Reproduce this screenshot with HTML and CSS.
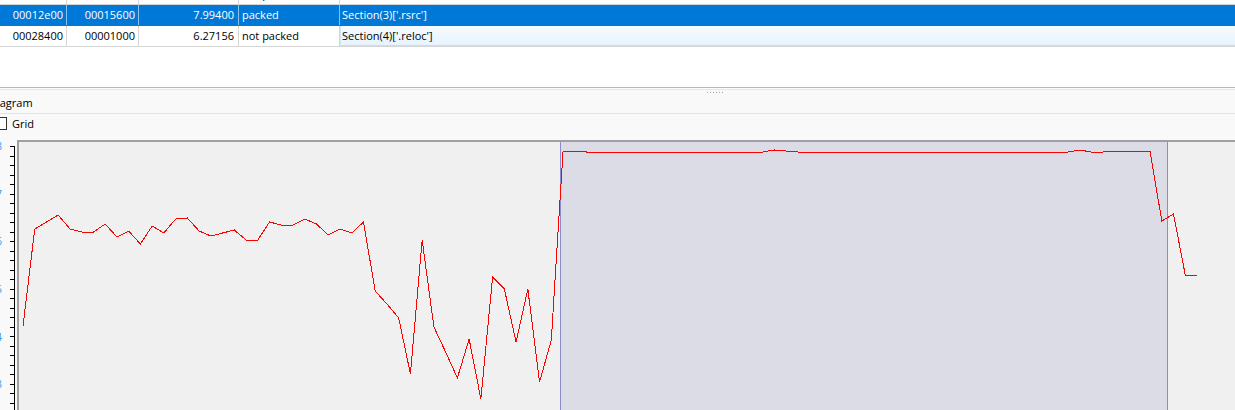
FILE: index.html
```html
<!DOCTYPE html>
<html>
<head>
<meta charset="utf-8">
<link rel="stylesheet" href="styles.css">
</head>
<body>
<div class="app">
  <div class="table">
    <div class="rows">
      <div class="row">
        <div class="c c1">00009a00</div>
        <div class="c c2">00009400</div>
        <div class="c c3">5.43210</div>
        <div class="c c4">not packed</div>
        <div class="c c5">Section(2)['.data']</div>
      </div>
      <div class="row sel">
        <div class="c c1">00012e00</div>
        <div class="c c2">00015600</div>
        <div class="c c3">7.99400</div>
        <div class="c c4">packed</div>
        <div class="c c5">Section(3)['.rsrc']</div>
      </div>
      <div class="row">
        <div class="c c1">00028400</div>
        <div class="c c2">00001000</div>
        <div class="c c3">6.27156</div>
        <div class="c c4">not packed</div>
        <div class="c c5 hot">Section(4)['.reloc']</div>
      </div>
    </div>
  </div>
  <div class="splitter"><span class="grip"></span></div>
  <div class="panel">
    <div class="title"><span class="title-text">Diagram</span></div>
    <div class="opt"><span class="box"></span><span class="opt-label">Grid</span></div>
    <div class="chart">
      <svg class="plot" width="1235" height="270" viewBox="0 0 1235 270" shape-rendering="crispEdges">
        <rect x="17" y="0" width="1218" height="270" fill="#f0f0f0"/>
        <rect x="561" y="2" width="606" height="268" fill="#dcdce6"/>
        <rect x="17" y="0" width="1218" height="2" fill="#a0a0a0"/>
        <rect x="17" y="0" width="2" height="270" fill="#a0a0a0"/>
        <line x1="560.5" y1="2" x2="560.5" y2="270" stroke="#8c8cc8" stroke-width="1"/>
        <line x1="1167.5" y1="2" x2="1167.5" y2="270" stroke="#8c8cc8" stroke-width="1"/>
        <line x1="14.5" y1="6" x2="14.5" y2="270" stroke="#000" stroke-width="1"/>
        <path stroke="#000" stroke-width="1" fill="none" d="M10 6.5h5M10 16.5h5M10 25.5h5M10 35.5h5M10 44.5h5M10 54.5h5M10 63.5h5M10 73.5h5M10 82.5h5M10 92.5h5M10 101.5h5M10 111.5h5M10 120.5h5M10 130.5h5M10 139.5h5M10 149.5h5M10 158.5h5M10 168.5h5M10 177.5h5M10 187.5h5M10 196.5h5M10 206.5h5M10 215.5h5M10 225.5h5M10 234.5h5M10 244.5h5M10 253.5h5M10 263.5h5"/>
        <g class="ticklbl" text-anchor="end">
          <text x="2" y="10">8</text>
          <text x="2" y="58">7</text>
          <text x="2" y="105">6</text>
          <text x="2" y="153">5</text>
          <text x="2" y="201">4</text>
          <text x="2" y="248">3</text>
        </g>
        <polyline fill="none" stroke="#ff0000" stroke-width="1" points="23,186 34.74,89 46.48,82 58.22,75 69.96,89 81.7,92 93.44,92 105.18,84 116.92,97 128.66,91 140.4,104 152.14,86 163.88,93 175.62,79 187.36,78 199.1,91 210.84,96 222.58,93 234.32,90 246.06,100 257.8,100 269.54,82 281.28,85 293.02,85 304.76,79 316.5,84 328.24,95 339.98,89 351.72,93 363.46,82 375.2,151 386.94,164 398.68,178 410.42,234 422.16,100 433.9,187 445.64,212 457.38,238 469.12,199 480.86,259 492.6,137 504.34,149 516.08,202 527.82,149 539.56,242 551.3,200 563.04,11 574.78,11 586.52,12 762.62,12 774.36,10 786.1,11 797.84,12 1067.86,12 1079.6,10 1091.34,12 1103.08,12 1114.82,11 1150.04,11 1161.78,81 1173.52,74 1185.26,135 1197,135"/>
      </svg>
    </div>
  </div>
</div>
</body>
</html>
```

FILE: styles.css
```css
* {
  box-sizing: border-box;
  margin: 0;
  padding: 0;
}

html,
body {
  width: 1235px;
  height: 410px;
  overflow: hidden;
  background: #ffffff;
}

body {
  font-family: "Open Sans", "Noto Sans", sans-serif;
  font-size: 11px;
  color: #000000;
}

.app {
  display: flex;
  flex-direction: column;
  height: 410px;
}

.table {
  height: 87px;
  flex: 0 0 87px;
  overflow: hidden;
  background: #ffffff;
}

.rows {
  margin-top: -16px;
}

.row {
  display: flex;
  height: 21px;
  border-bottom: 1px solid #d6d6d6;
}

.c {
  height: 20px;
  line-height: 20px;
  padding: 0 3px;
  border-right: 1px solid #d6d6d6;
  white-space: nowrap;
  overflow: hidden;
}

.c1 {
  width: 67px;
  text-align: right;
}

.c2 {
  width: 72px;
  text-align: right;
}

.c3 {
  width: 100px;
  text-align: right;
  padding-right: 4px;
}

.c4 {
  width: 101px;
}

.c5 {
  flex: 1;
  border-right: 0;
  padding-left: 2px;
}

.sel {
  background: #0078d7;
  color: #ffffff;
  border-bottom-color: #0078d7;
}

.sel .c {
  border-right-color: rgba(255, 255, 255, 0.55);
}

.hot {
  background: linear-gradient(#f6fbff, #e6f3fe);
  box-shadow: inset 0 -1px #c4e0f7, inset 1px 0 #d4e6f5;
}

.splitter {
  flex: 0 0 6px;
  height: 6px;
  border-top: 1px solid #b9b9b9;
  background: linear-gradient(#fdfdfd 0 1px, #e6e6e6 1px 2px, #f9f9f9 2px);
}

.grip {
  display: block;
  margin-left: 707px;
  margin-top: 4px;
  width: 16px;
  height: 1px;
  background: repeating-linear-gradient(to right, #a8a8a8 0 1px, transparent 1px 3px);
}

.panel {
  flex: 1;
  display: flex;
  flex-direction: column;
  background: #f9f9f9;
  overflow: hidden;
}

.title {
  height: 21px;
  flex: 0 0 21px;
  line-height: 20px;
  border-bottom: 1px solid #e3e3e3;
  white-space: nowrap;
}

.title-text {
  display: inline-block;
  margin-left: -11px;
}

.opt {
  height: 26px;
  flex: 0 0 26px;
  display: flex;
  align-items: flex-start;
  padding-top: 3px;
  gap: 5px;
}

.box {
  width: 13px;
  height: 13px;
  margin-left: -6px;
  border: 1px solid #333333;
  background: #ffffff;
}

.opt-label {
  line-height: 13px;
}

.chart {
  flex: 1;
  overflow: hidden;
}

.plot {
  display: block;
}

.ticklbl {
  fill: #3d9df2;
  font-family: "Open Sans", sans-serif;
  font-size: 11px;
}
```
